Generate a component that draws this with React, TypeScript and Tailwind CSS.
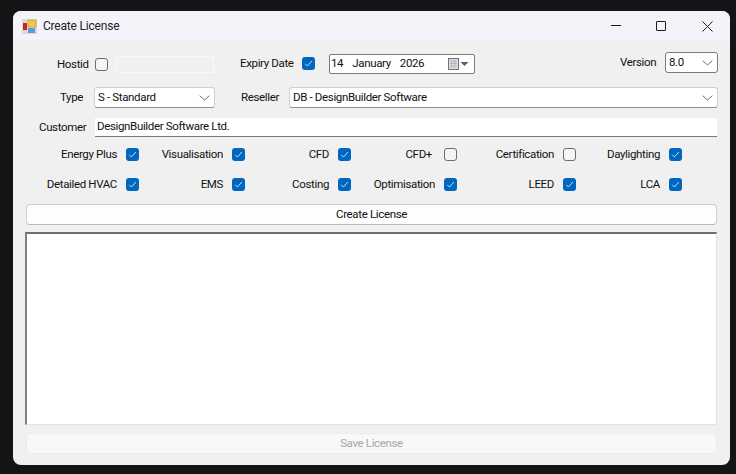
import React from 'react';

const FONT = "font-['Roboto','Noto_Sans',sans-serif]";

const Check = ({ on }: { on: boolean }) =>
  on ? (
    <span className="w-[13px] h-[13px] rounded-[3px] bg-[#0067c0] flex items-center justify-center shrink-0">
      <svg width="9" height="9" viewBox="0 0 9 9" fill="none">
        <path d="M1.2 4.8 3.4 7 7.9 2" stroke="#d5e6f6" strokeWidth="0.9" />
      </svg>
    </span>
  ) : (
    <span className="block w-[13px] h-[13px] rounded-[3px] border border-[#6e6e6e] bg-[#f5f5f5] shrink-0" />
  );

const Chevron = () => (
  <svg width="11" height="6" viewBox="0 0 11 6" fill="none" className="shrink-0">
    <path d="M.7.7 5.5 5 10.3.7" stroke="#6a6a6a" strokeWidth="1" />
  </svg>
);

const Combo = ({ text, className }: { text: string; className: string }) => (
  <div className={`h-[21px] flex items-center justify-between pl-[3px] pr-[4px] bg-white rounded-[3px] border ${className}`}>
    <span>{text}</span>
    <Chevron />
  </div>
);

const Option = ({ label, on }: { label: string; on: boolean }) => (
  <div className={`flex items-center justify-end h-[13px] ${label === 'CFD+' ? 'gap-[12px]' : 'gap-[9px]'}`}>
    <span className="whitespace-nowrap">{label}</span>
    <Check on={on} />
  </div>
);

const options = [
  ['Energy Plus', true],
  ['Visualisation', true],
  ['CFD', true],
  ['CFD+', false],
  ['Certification', false],
  ['Daylighting', true],
  ['Detailed HVAC', true],
  ['EMS', true],
  ['Costing', true],
  ['Optimisation', true],
  ['LEED', true],
  ['LCA', true],
] as [string, boolean][];

const softBorder = 'border-[#d0d0d0] border-b-[#8c8c8c]';

export default function App() {
  return (
    <div className={`w-[736px] h-[474px] bg-[#131416] pt-[11px] pl-[13px] overflow-hidden text-[11.5px] tracking-[-0.35px] leading-none text-[#111] ${FONT}`}>
      <div className="w-[717px] h-[454px] bg-[#f0f0f0] rounded-[8px] overflow-hidden flex flex-col">
        {/* Title bar */}
        <div className="h-[30px] bg-[#f3f3f9] flex items-center shrink-0 pl-[9px]">
          <svg width="15" height="15" viewBox="0 0 15 15" className="shrink-0">
            <rect x="0" y="0" width="15" height="15" fill="#d9d9d9" />
            <rect x="1" y="4" width="4" height="7" fill="#c8241c" />
            <rect x="6" y="1" width="8" height="7" fill="#f2c84a" stroke="#c09a2a" strokeWidth="0.7" />
            <rect x="6" y="9" width="7" height="5" fill="#5b9be4" />
          </svg>
          <span className="ml-[6px] text-[#222] text-[12px] tracking-[-0.2px]">Create License</span>
          <div className="ml-auto flex items-center">
            <svg width="10" height="2" viewBox="0 0 10 2" className="mr-[35px]">
              <rect width="10" height="1" fill="#1a1a1a" />
            </svg>
            <span className="w-[10px] h-[10px] border border-[#1a1a1a] rounded-[1px] mr-[36px]" />
            <svg width="11" height="11" viewBox="0 0 11 11" className="mr-[17px]" fill="none">
              <path d="M.5.5l10 10M10.500.5l-10 10" stroke="#1a1a1a" strokeWidth="1" />
            </svg>
          </div>
        </div>

        {/* Row 1 */}
        <div className="h-[22px] mt-[11px] flex items-start shrink-0">
          <span className="ml-[44px] w-[30px] mt-[7px] text-right">Hostid</span>
          <span className="block ml-[8px] mt-[6px]"><Check on={false} /></span>
          <div className="ml-[8px] mt-[4px] w-[98px] h-[17px] bg-[#f0f0f0] border border-[#f8f8f8]" />
          <span className="ml-[26px] mt-[6px] w-[54px] whitespace-nowrap">Expiry Date</span>
          <span className="block ml-[8px] mt-[5px]"><Check on={true} /></span>
          <div className="ml-[14px] mt-[2px] w-[146px] h-[20px] bg-white border border-[#7a7a7a] rounded-[2px] flex items-center pl-[1px] pr-[5px]">
            <span>14</span>
            <span className="ml-[9px]">January</span>
            <span className="ml-[9px]">2026</span>
            <svg width="21" height="13" viewBox="0 0 21 13" className="ml-auto">
              <rect x="0.500" y="0.500" width="10" height="11" fill="#dcdfe4" stroke="#77716d" />
              <path d="M2 3h7M2 5.500h7M2 8h7M4 2v8M7 2v8" stroke="#a7acb5" strokeWidth="0.7" />
              <path d="M12.500 4h8l-4 4z" fill="#4b6286" />
            </svg>
          </div>
          <span className="ml-[145px] mt-[5px] w-[35px]">Version</span>
          <Combo text="8.0" className="ml-[10px] w-[53px] border-[#7a7a7a]" />
        </div>

        {/* Row 2 */}
        <div className="h-[21px] mt-[13px] flex items-center shrink-0">
          <span className="ml-[47px] w-[24px]">Type</span>
          <Combo text="S - Standard" className={`ml-[10px] w-[121px] ${softBorder}`} />
          <span className="ml-[26px] w-[40px]">Reseller</span>
          <Combo text="DB - DesignBuilder Software" className={`ml-[8px] w-[429px] ${softBorder}`} />
        </div>

        {/* Row 3 */}
        <div className="h-[19px] mt-[10px] flex items-center shrink-0">
          <span className="ml-[26px] w-[46px]">Customer</span>
          <div className="ml-[10px] w-[622px] h-[19px] bg-white border-b border-[#7a7a7a] flex items-center pl-[2px]">
            DesignBuilder Software Ltd.
          </div>
        </div>

        {/* Feature checkboxes */}
        <div className="mt-[11px] ml-[13px] w-[656px] grid grid-cols-[113px_106px_106px_106px_119px_106px] gap-y-[17px] shrink-0">
          {options.map(([label, on]) => (
            <Option key={label} label={label} on={on} />
          ))}
        </div>

        <div className="mx-[13px] mt-[13px] h-[21px] bg-[#fdfdfd] border border-[#d0d0d0] border-b-[#b8b8b8] rounded-[4px] flex items-center justify-center shrink-0">
          Create License
        </div>

        <div className="ml-[12px] mr-[13px] mt-[7px] h-[193px] bg-white border-t-2 border-l-2 border-r border-b border-t-[#6e6e6e] border-l-[#7f7f7f] border-r-[#e3e3e3] border-b-[#e3e3e3] shrink-0" />

        <div className="mx-[13px] mt-[8px] h-[21px] bg-[#f8f8f8] border border-[#ececec] rounded-[4px] flex items-center justify-center text-[#a6a6a6] shrink-0">
          Save License
        </div>
      </div>
    </div>
  );
}
